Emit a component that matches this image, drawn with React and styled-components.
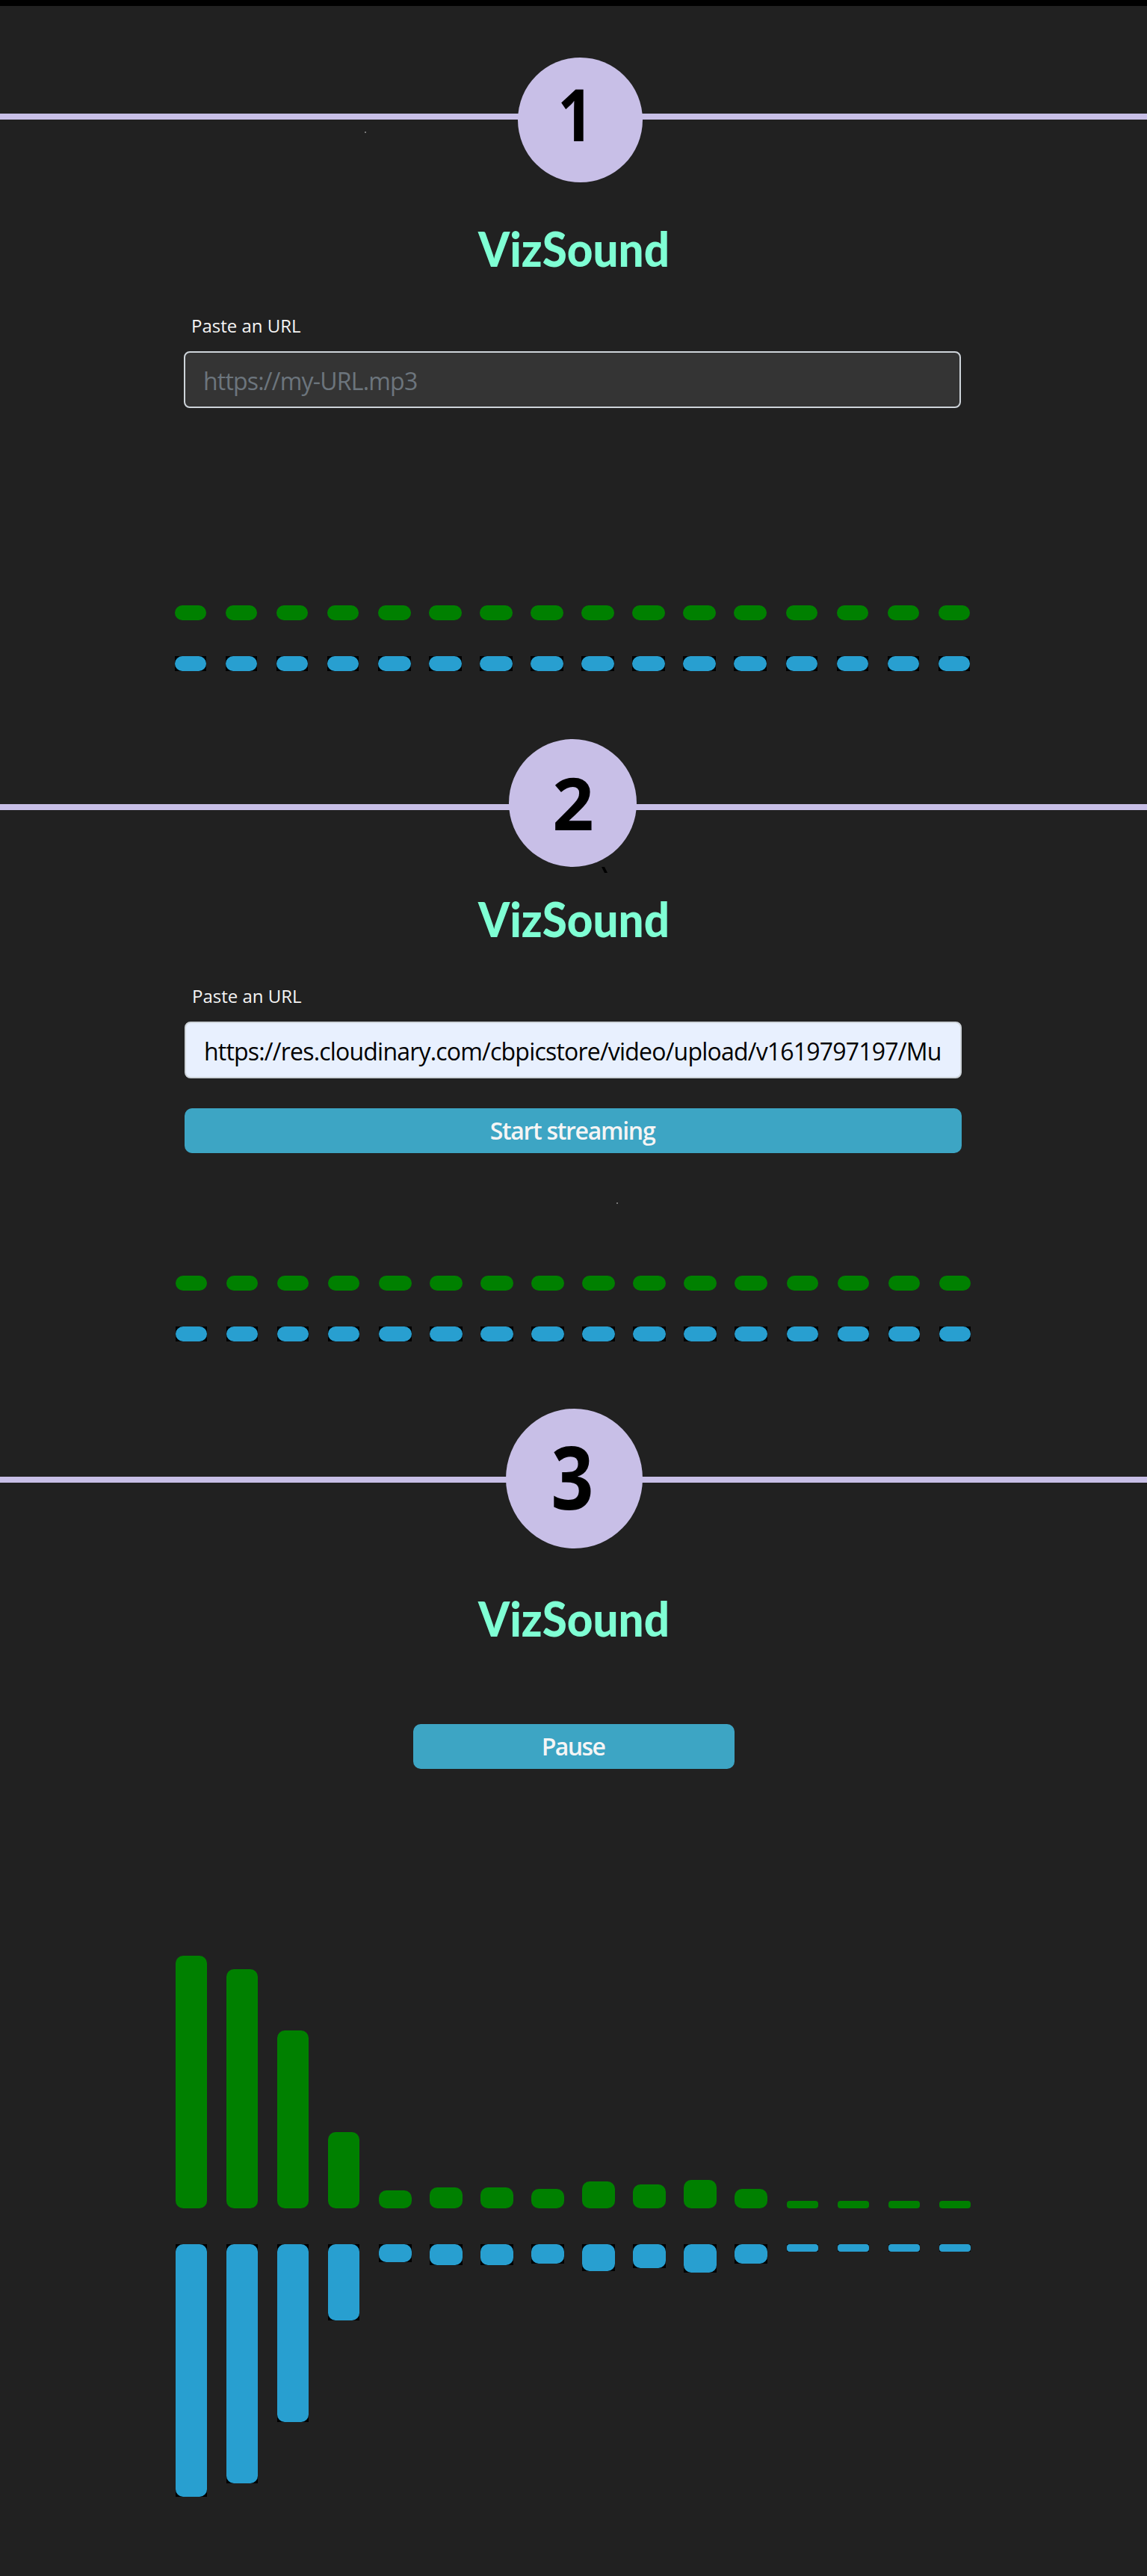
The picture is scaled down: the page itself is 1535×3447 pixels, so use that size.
import React from "react";
import styled, { createGlobalStyle } from "styled-components";

const Global = createGlobalStyle`
  html, body { margin: 0; background: #212121; }
  * { box-sizing: border-box; }
`;

const Page = styled.main`
  width: 1535px;
  height: 3447px;
  overflow: hidden;
  background: #212121;
  border-top: 8px solid #000;
  font-family: "Open Sans", "Noto Sans", sans-serif;
  color: #f5f5f5;
`;

const Section = styled.section`
  display: flex;
  flex-direction: column;
  height: ${(p) => p.$height}px;
  padding-top: ${(p) => p.$top}px;
`;

const Divider = styled.div`
  position: relative;
  flex: none;
  height: 8px;
  background: #c8bfe7;
`;

const Badge = styled.div`
  position: absolute;
  left: ${(p) => p.$left}px;
  top: ${(p) => p.$top}px;
  width: ${(p) => p.$w}px;
  height: ${(p) => p.$h}px;
  border-radius: 50%;
  background: #c8bfe7;
`;

const DigitSvg = styled.svg`
  display: block;
  overflow: visible;
`;

const Digit = styled.text`
  font-family: "Open Sans", sans-serif;
  font-weight: 700;
  fill: #000;
`;

const Speck = styled.svg`
  position: absolute;
  left: ${(p) => p.$left}px;
  top: ${(p) => p.$top}px;
`;

const LogoSvg = styled.svg`
  flex: none;
  display: block;
  overflow: visible;
  margin: ${(p) => p.$gap}px 0 0 636px;
`;

const LogoText = styled.text`
  font-family: Lato, sans-serif;
  font-weight: 900;
  font-size: 64px;
  fill: #7fffd4;
`;

const Form = styled.form`
  display: flex;
  flex-direction: column;
  width: 1040px;
  margin: 43px 0 0 ${(p) => p.$left}px;
`;

const Label = styled.label`
  padding-left: 10px;
  margin-bottom: 16px;
  font-size: 24px;
  line-height: 36px;
  white-space: nowrap;
`;

const Field = styled.div`
  display: flex;
  align-items: center;
  height: 76px;
  padding: 3px 24px 0;
  border: 2px solid #ced4da;
  border-radius: 8px;
  background: ${(p) => (p.$filled ? "#e8f0fe" : "#343434")};
  color: ${(p) => (p.$filled ? "#000" : "#6c757d")};
  font-size: 32px;
  line-height: 48px;
  letter-spacing: -0.8px;
  white-space: nowrap;
`;

const Button = styled.button`
  flex: none;
  height: 60px;
  width: ${(p) => p.$w}px;
  margin: ${(p) => p.$m};
  padding: 0 2px 0 0;
  border: 0;
  border-radius: 10px;
  background: #3da5c4;
  color: #f5f5f5;
  font: 600 32px/48px "Open Sans", sans-serif;
  letter-spacing: ${(p) => p.$track}px;
`;

const Bars = styled.div`
  display: grid;
  grid-template-columns: repeat(16, 68px);
  align-items: ${(p) => (p.$up ? "end" : "start")};
  height: ${(p) => p.$h}px;
  margin: ${(p) => p.$gap}px 0 0 ${(p) => p.$left}px;
`;

const Slot = styled.div`
  width: ${(p) => p.$w}px;
  margin-left: ${(p) => p.$shift}px;
  height: ${(p) => p.$h}px;
  background: ${(p) => (p.$blue ? "#000" : "transparent")};
`;

const Fill = styled.div`
  height: 100%;
  border-radius: ${(p) => p.$r}px;
  background: ${(p) => (p.$blue ? "#289fd0" : "#008000")};
`;

const IDLE = Array(16).fill(20);
const PLAYING = [338, 320, 238, 102, 24, 28, 28, 26, 36, 32, 38, 26, 10, 10, 10, 10];

function BarRow({ data, up, height, gap, left }) {
  return (
    <Bars $up={up} $h={height} $gap={gap} $left={left}>
      {data.map((h, i) => (
        <Slot key={i} $h={h} $w={i > 3 && i < 12 ? 44 : 42} $shift={i > 11 ? 2 : 0} $blue={!up}>
          <Fill $blue={!up} $r={h < 20 ? 4 : 10} />
        </Slot>
      ))}
    </Bars>
  );
}

function Logo({ gap }) {
  return (
    <LogoSvg $gap={gap} width="280" height="84">
      <LogoText x="4" y="66" textLength="256" lengthAdjust="spacingAndGlyphs">
        VizSound
      </LogoText>
    </LogoSvg>
  );
}

function Step({ n, left, top, w, h, x, y, size, sx, children }) {
  return (
    <Divider>
      <Badge $left={left} $top={top} $w={w} $h={h}>
        <DigitSvg width={w} height={h}>
          <Digit fontSize={size} textAnchor="middle" transform={`translate(${x} ${y}) scale(${sx} 1)`}>{n}</Digit>
        </DigitSvg>
      </Badge>
      {children}
    </Divider>
  );
}

export default function App() {
  return (
    <>
      <Global />
      <Page>
        <Section $height={1068} $top={144}>
          <Step n="1" left={693} top={-75} w={167} h={167} x={77} y={112} size={97} sx={0.86}>
            <Speck $left={488} $top={24} width="2" height="2"><rect width="2" height="2" fill="#777" /></Speck>
          </Step>
          <Logo gap={131} />
          <Form $left={246}>
            <Label>Paste an URL</Label>
            <Field>https://my-URL.mp3</Field>
          </Form>
          <BarRow data={IDLE} up height={20} gap={264} left={234} />
          <BarRow data={IDLE} height={20} gap={48} left={234} />
        </Section>
        <Section $height={900} $top={0}>
          <Step n="2" left={681} top={-87} w={171} h={171} x={86} y={122} size={97} sx={1}>
            <Speck $left={805} $top={84} width="9" height="8"><path d="M0 0h4l4 8h-4z" fill="#000" /></Speck>
          </Step>
          <Logo gap={104} />
          <Form $left={247}>
            <Label>Paste an URL</Label>
            <Field $filled>https://res.cloudinary.com/cbpicstore/video/upload/v1619797197/Mu</Field>
            <Button type="button" $w={1040} $m="40px 0 0" $track={-1.3}>Start streaming</Button>
          </Form>
          <BarRow data={IDLE} up height={20} gap={164} left={235} />
          <BarRow data={IDLE} height={20} gap={48} left={235} />
          <Speck $left={825} $top={1609} width="2" height="2"><rect width="2" height="2" fill="#777" /></Speck>
        </Section>
        <Section $height={1471} $top={0}>
          <Step n="3" left={677} top={-91} w={183} h={187} x={89} y={135} size={117} sx={0.85} />
          <Logo gap={140} />
          <Button type="button" $w={430} $m="99px 0 0 553px" $track={-1.6}>Pause</Button>
          <BarRow data={PLAYING} up height={338} gap={250} left={235} />
          <BarRow data={PLAYING} height={338} gap={48} left={235} />
        </Section>
      </Page>
    </>
  );
}
